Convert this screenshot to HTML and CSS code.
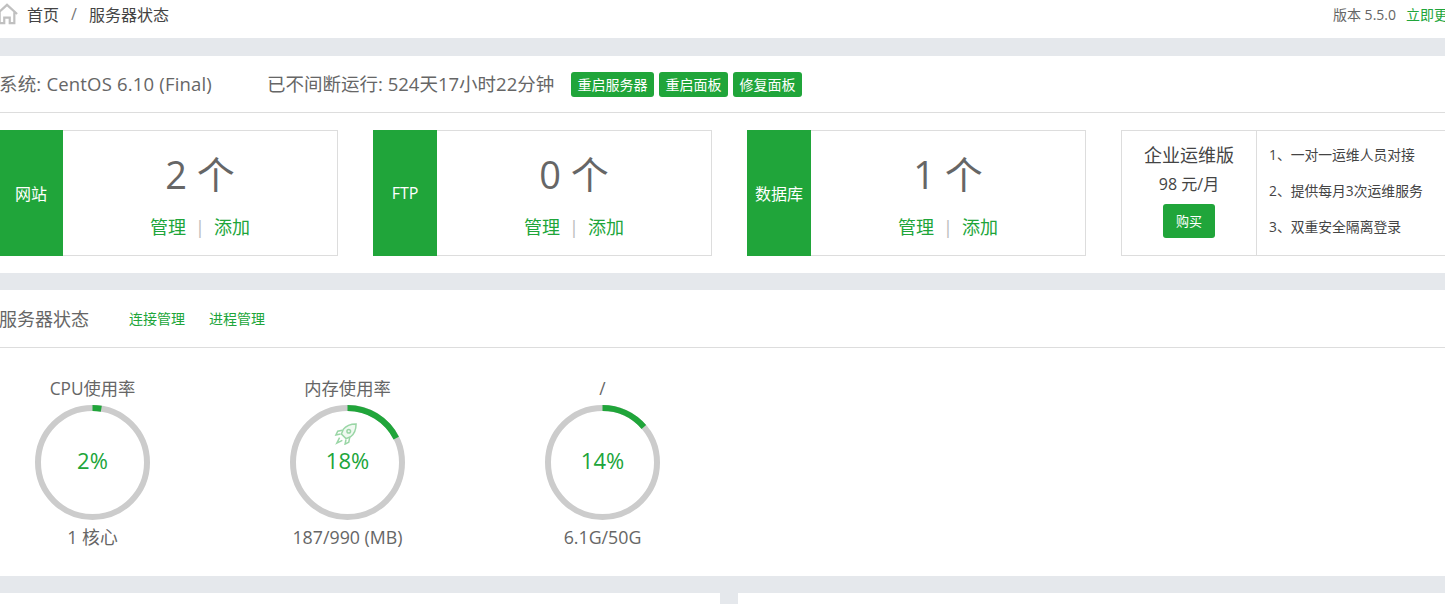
FILE: index.html
```html
<!DOCTYPE html>
<html lang="zh-CN">
<head>
    <meta charset="UTF-8">
    <title>服务器状态</title>
    <link rel="stylesheet" href="styles.css">
</head>
<body>
    <div class="crumbs">
        <svg class="home" viewBox="0 0 24 24"><path d="M1 12 12 2l11 10M4 10v12h5v-6h6v6h5V10" fill="none" stroke="#c0c0c0" stroke-width="2.4"/></svg>
        <span class="crumb">首页</span>
        <span class="sep">/</span>
        <span class="crumb">服务器状态</span>
        <span class="version">版本 5.5.0</span>
        <a class="update">立即更新</a>
    </div>

    <div class="panel">
        <div class="sys">
            <span class="os">系统: CentOS 6.10 (Final)</span>
            <span class="uptime">已不间断运行: 524天17小时22分钟</span>
            <a class="btn">重启服务器</a>
            <a class="btn">重启面板</a>
            <a class="btn">修复面板</a>
        </div>
        <div class="cards">
            <div class="card">
                <div class="tag">网站</div>
                <div class="card-body">
                    <div class="count">2 个</div>
                    <div class="links"><a>管理</a><i>|</i><a>添加</a></div>
                </div>
            </div>
            <div class="card">
                <div class="tag">FTP</div>
                <div class="card-body">
                    <div class="count">0 个</div>
                    <div class="links"><a>管理</a><i>|</i><a>添加</a></div>
                </div>
            </div>
            <div class="card">
                <div class="tag">数据库</div>
                <div class="card-body">
                    <div class="count">1 个</div>
                    <div class="links"><a>管理</a><i>|</i><a>添加</a></div>
                </div>
            </div>
            <div class="promo">
                <div class="promo-left">
                    <div class="promo-title">企业运维版</div>
                    <div class="promo-price">98 元/月</div>
                    <a class="buy">购买</a>
                </div>
                <ul class="promo-list">
                    <li>1、一对一运维人员对接</li>
                    <li>2、提供每月3次运维服务</li>
                    <li>3、双重安全隔离登录</li>
                </ul>
            </div>
        </div>
    </div>

    <div class="panel">
        <div class="status-head">
            <span class="status-title">服务器状态</span>
            <a>连接管理</a>
            <a>进程管理</a>
        </div>
        <div class="gauges">
            <div class="gauge">
                <div class="gauge-label">CPU使用率</div>
                <div class="ring">
                    <svg viewBox="0 0 115 115">
                        <circle class="track" cx="57.5" cy="57.5" r="54.5"/>
                        <circle class="value" cx="57.5" cy="57.5" r="54.5" pathLength="100" stroke-dasharray="2.6 100"/>
                    </svg>
                    <span class="pct">2%</span>
                </div>
                <div class="gauge-label gauge-info">1 核心</div>
            </div>
            <div class="gauge">
                <div class="gauge-label">内存使用率</div>
                <div class="ring">
                    <svg viewBox="0 0 115 115">
                        <circle class="track" cx="57.5" cy="57.5" r="54.5"/>
                        <circle class="value" cx="57.5" cy="57.5" r="54.5" pathLength="100" stroke-dasharray="17.6 100"/>
                    </svg>
                    <svg class="rocket" viewBox="0 0 24 24" fill="none" stroke="#20a53a" stroke-width="1.6">
                        <path d="M23 1c-6 0-11 2-14 6l-2 5 5 5 5-2c4-3 6-8 6-14z" fill="#20a53a" fill-opacity=".15"/>
                        <circle cx="15" cy="9" r="2"/>
                        <path d="M8 8 3 9l-2 4 5-1M16 16l-1 5-4 2 1-5M5 16l-3 6 6-3"/>
                    </svg>
                    <span class="pct">18%</span>
                </div>
                <div class="gauge-label gauge-info">187/990 (MB)</div>
            </div>
            <div class="gauge">
                <div class="gauge-label">/</div>
                <div class="ring">
                    <svg viewBox="0 0 115 115">
                        <circle class="track" cx="57.5" cy="57.5" r="54.5"/>
                        <circle class="value" cx="57.5" cy="57.5" r="54.5" pathLength="100" stroke-dasharray="13.7 100"/>
                    </svg>
                    <span class="pct">14%</span>
                </div>
                <div class="gauge-label gauge-info">6.1G/50G</div>
            </div>
        </div>
    </div>

    <div class="bottom">
        <div class="bottom-col"></div>
        <div class="bottom-col"></div>
    </div>
</body>
</html>
```

FILE: styles.css
```css
* {
    box-sizing: border-box;
    margin: 0;
    padding: 0;
}
html, body {
    height: 604px;
    overflow: hidden;
}
body {
    background: #e5e8ec;
    color: #555;
    font-family: "Open Sans", "Noto Sans CJK SC", sans-serif;
    font-size: 14px;
}
a {
    color: #20a53a;
}
.crumbs {
    background: #fff;
    height: 38px;
    margin-bottom: 18px;
    display: flex;
    align-items: center;
    padding-bottom: 11px;
    white-space: nowrap;
}
.home {
    width: 22px;
    height: 22px;
    margin-left: -4px;
    margin-right: 9px;
}
.crumb {
    font-size: 16px;
    color: #444;
}
.sep {
    font-size: 16px;
    color: #777;
    margin: 0 12px;
}
.version {
    margin-left: auto;
    font-size: 14px;
    color: #666;
}
.update {
    font-size: 14px;
    margin-left: 10px;
    margin-right: -17px;
}
.panel {
    background: #fff;
    margin-bottom: 17px;
}
.sys {
    height: 57px;
    border-bottom: 1px solid #ddd;
    display: flex;
    align-items: center;
    white-space: nowrap;
    font-size: 18.5px;
    color: #666;
    padding-bottom: 2px;
}
.os {
    margin-left: -1px;
    width: 268px;
    letter-spacing: .18px;
}
.uptime {
    width: 304px;
}
.btn {
    background: #20a53a;
    color: #fff;
    font-size: 14px;
    height: 25px;
    line-height: 25px;
    padding: 0 6.5px;
    border-radius: 3px;
    margin: 2px 5px 0 0;
}
.cards {
    display: flex;
    padding: 17px 0;
    margin-left: -1px;
    width: 1560px;
}
.card {
    width: 339px;
    height: 126px;
    margin-right: 35px;
    border: 1px solid #ddd;
    border-left: 0;
    display: flex;
}
.tag {
    width: 64px;
    margin: -1px 0;
    background: #20a53a;
    color: #fff;
    font-size: 16px;
    display: flex;
    align-items: center;
    justify-content: center;
}
.card-body {
    flex: 1;
    text-align: center;
}
.count {
    font-size: 38px;
    line-height: 50px;
    margin-top: 18px;
    color: #666;
}
.links {
    margin-top: 16px;
    font-size: 18px;
    line-height: 24px;
}
.links i {
    font-style: normal;
    color: #bbb;
    margin: 0 9px;
}
.promo {
    width: 340px;
    height: 126px;
    border: 1px solid #ddd;
    display: flex;
}
.promo-left {
    width: 135px;
    border-right: 1px solid #ddd;
    text-align: center;
    padding-top: 12px;
}
.promo-title {
    font-size: 18px;
    line-height: 25px;
    color: #444;
}
.promo-price {
    font-size: 16px;
    line-height: 22px;
    margin-top: 5px;
    color: #444;
}
.buy {
    display: block;
    width: 52px;
    height: 34px;
    line-height: 34px;
    margin: 9px auto 0;
    background: #20a53a;
    color: #fff;
    font-size: 13px;
    border-radius: 3px;
}
.promo-list {
    list-style: none;
    padding: 6px 0 0 12px;
    font-size: 13.8px;
    color: #444;
}
.promo-list li {
    line-height: 36px;
    white-space: nowrap;
}
.status-head {
    height: 58px;
    border-bottom: 1px solid #ddd;
    display: flex;
    align-items: center;
    font-size: 14px;
    white-space: nowrap;
    padding-bottom: 2px;
}
.status-title {
    font-size: 18px;
    color: #666;
    margin-left: -1px;
    width: 130px;
}
.status-head a {
    margin-right: 24px;
}
.gauges {
    display: flex;
    height: 228px;
    padding: 30px 0 0 35px;
}
.gauge {
    width: 115px;
    margin-right: 140px;
    text-align: center;
}
.gauge-label {
    font-size: 17.3px;
    line-height: 22px;
    white-space: nowrap;
    margin: 0 -40px;
    color: #666;
}
.gauge-info {
    font-size: 17.8px;
}
.ring {
    position: relative;
    width: 115px;
    height: 115px;
    margin: 5px 0 6px;
}
.ring svg {
    display: block;
    transform: rotate(-90deg);
}
.ring .rocket {
    position: absolute;
    left: 44px;
    top: 18px;
    width: 24px;
    height: 22px;
    opacity: .45;
    transform: none;
}
.track, .value {
    fill: none;
    stroke-width: 6;
}
.track {
    stroke: #ccc;
}
.value {
    stroke: #20a53a;
}
.pct {
    position: absolute;
    left: 0;
    right: 0;
    top: 40px;
    font-size: 22px;
    line-height: 30px;
    color: #20a53a;
}
.bottom {
    display: flex;
    gap: 18px;
    height: 40px;
}
.bottom-col {
    flex: 0 0 720px;
    background: #fff;
}
.bottom-col + .bottom-col {
    flex: 1;
}
```
